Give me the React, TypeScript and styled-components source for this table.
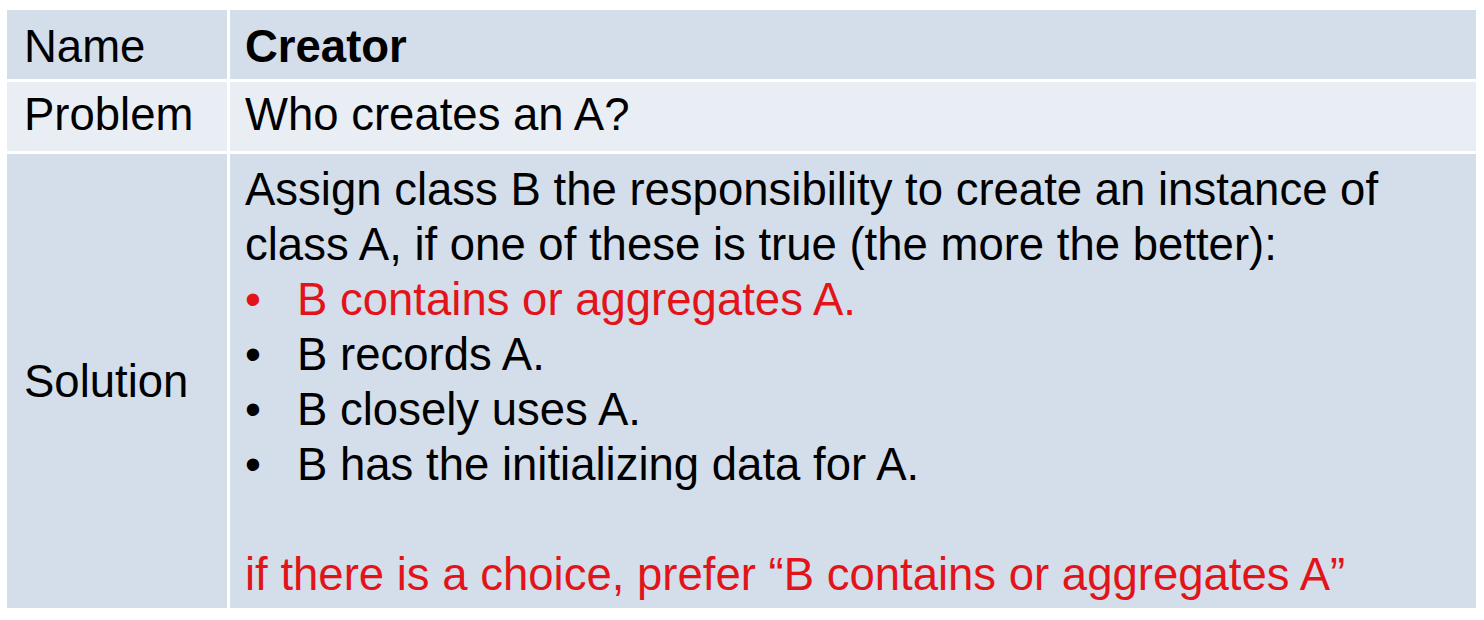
import React from 'react';
import styled, { createGlobalStyle } from 'styled-components';

const GlobalStyle = createGlobalStyle`
  html, body {
    margin: 0;
    padding: 0;
    background: #ffffff;
  }
  body {
    font-family: 'Liberation Sans', Arial, sans-serif;
    color: #000000;
  }
`;

const Page = styled.div`
  width: 1484px;
  height: 620px;
  padding: 10px 8px 0 7px;
  box-sizing: border-box;
`;

const Table = styled.div`
  display: grid;
  grid-template-columns: 220px 1fr;
  grid-template-rows: 69px 69px 454px;
  gap: 3px;
  background: #ffffff;
  width: 1469px;
`;

// $nudge moves the text down (positive) or up (negative) inside the row
const Cell = styled.div<{ $tone: 'dark' | 'light'; $nudge?: number }>`
  background: ${({ $tone }) => ($tone === 'dark' ? '#d3deea' : '#e9eef5')};
  display: flex;
  align-items: center;
  font-size: 45.5px;
  line-height: 55px;
  padding: ${({ $nudge = 0 }) =>
    $nudge >= 0 ? `${$nudge * 2}px 16px 0 17px` : `0 16px ${-$nudge * 2}px 17px`};
  box-sizing: border-box;
`;

const ValueCell = styled(Cell)`
  padding-left: 15px;
`;

const Title = styled.span`
  font-weight: bold;
`;

const SolutionCell = styled(ValueCell)`
  flex-direction: column;
  align-items: flex-start;
  padding-top: 8px;
`;

const Line = styled.div<{ $red?: boolean }>`
  color: ${({ $red }) => ($red ? '#e2141a' : '#000000')};
  white-space: nowrap;
`;

const Bullet = styled.div<{ $red?: boolean }>`
  display: flex;
  color: ${({ $red }) => ($red ? '#e2141a' : '#000000')};
  white-space: nowrap;
  &::before {
    content: '•';
    width: 52px;
    flex-shrink: 0;
  }
`;

const Spacer = styled.div`
  height: 55px;
`;

const bullets = [
  { text: 'B contains or aggregates A.', red: true },
  { text: 'B records A.' },
  { text: 'B closely uses A.' },
  { text: 'B has the initializing data for A.' },
];

const App: React.FC = () => {
  return (
    <>
      <GlobalStyle />
      <Page>
        <Table>
          <Cell $tone="dark" $nudge={2}>Name</Cell>
          <ValueCell $tone="dark" $nudge={2}>
            <Title>Creator</Title>
          </ValueCell>
          <Cell $tone="light" $nudge={-2}>Problem</Cell>
          <ValueCell $tone="light" $nudge={-2}>Who creates an A?</ValueCell>
          <Cell $tone="dark">Solution</Cell>
          <SolutionCell $tone="dark">
            <Line>Assign class B the responsibility to create an instance of</Line>
            <Line>class A, if one of these is true (the more the better):</Line>
            {bullets.map((b) => (
              <Bullet key={b.text} $red={b.red}>
                {b.text}
              </Bullet>
            ))}
            <Spacer />
            <Line $red>if there is a choice, prefer “B contains or aggregates A”</Line>
          </SolutionCell>
        </Table>
      </Page>
    </>
  );
};

export default App;
